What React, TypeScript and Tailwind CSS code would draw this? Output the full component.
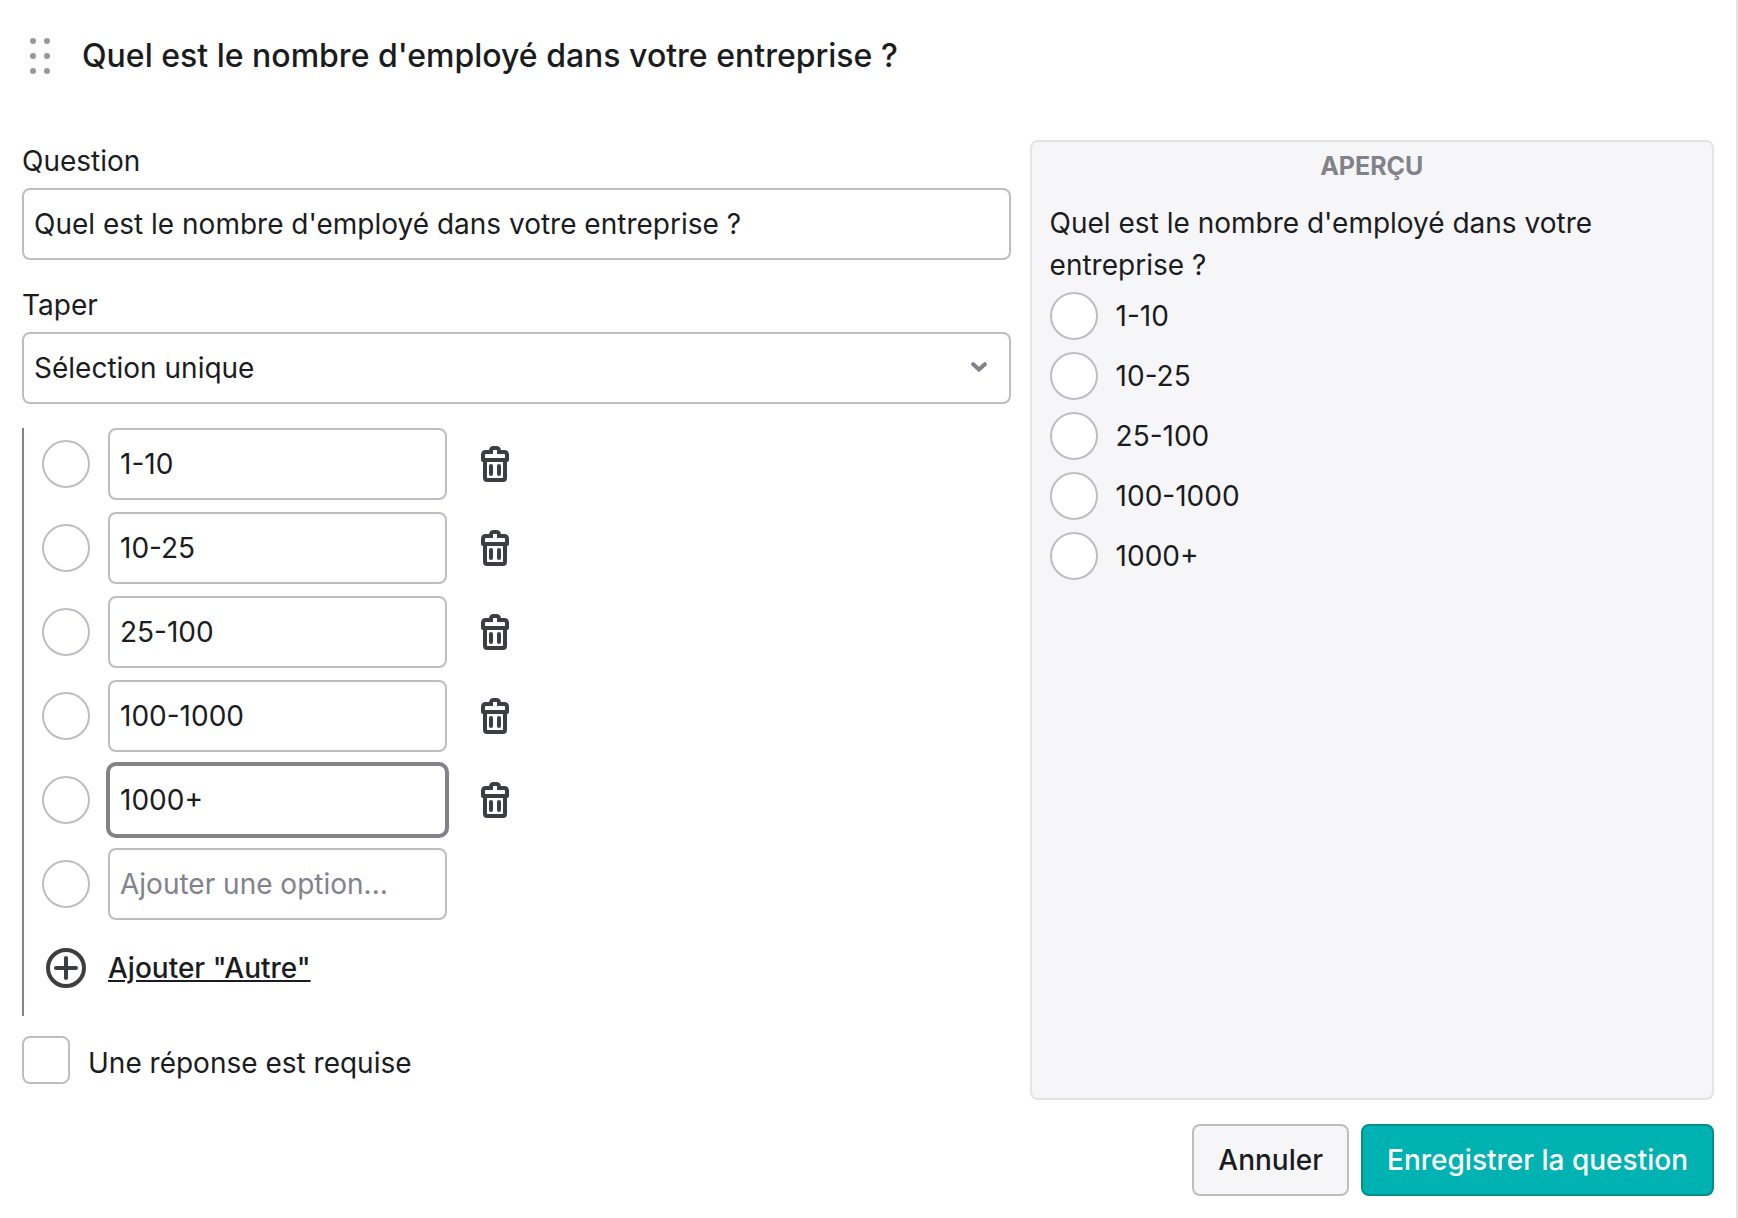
import { useState } from 'react';
import { clsx } from 'clsx';

const TITLE = "Quel est le nombre d'employé dans votre entreprise ?";
const OPTIONS = ['1-10', '10-25', '25-100', '100-1000', '1000+'];

const fieldClass =
  'w-full h-[72px] px-[10px] rounded-lg border-2 bg-white text-[#1a1c21] outline-none placeholder:text-[#82828c] placeholder:opacity-100';

const radioClass =
  'appearance-none w-12 h-12 shrink-0 rounded-full border-2 border-[#bdbdc3] bg-white';

function DragHandle() {
  return (
    <svg className="w-9 h-9" viewBox="0 0 36 36" fill="#96969f" aria-hidden="true">
      {[3, 18, 33].map((y) => (
        <g key={y}>
          <circle cx="11" cy={y} r="3" />
          <circle cx="25" cy={y} r="3" />
        </g>
      ))}
    </svg>
  );
}

function TrashIcon() {
  return (
    <svg className="w-7 h-9" viewBox="0 0 28 36" fill="none" stroke="#3d3e43" strokeWidth="4" strokeLinejoin="round" aria-hidden="true">
      <path d="M4 14v17.5c0 1.4.8 2.5 2 2.5h16c1.2 0 2-1.1 2-2.5V14" />
      <path d="M2 14V9c0-2 1-3 3-3h18c2 0 3 1 3 3v5z" />
      <path d="M10 5c0-2 1-3 3-3h2c2 0 3 1 3 3" />
      <path d="M14 4v4" stroke="#fff" />
      <path d="M10 20v8M18 20v8" strokeLinecap="round" />
    </svg>
  );
}

function PlusIcon() {
  return (
    <svg className="w-10 h-10" viewBox="0 0 40 40" fill="none" stroke="#3d3e43" strokeWidth="4" strokeLinecap="round" aria-hidden="true">
      <circle cx="20" cy="20" r="18" />
      <path d="M20 10v20M10 20h20" />
    </svg>
  );
}

interface OptionRowProps {
  value: string;
  focused?: boolean;
  onChange: (value: string) => void;
  onDelete?: () => void;
}

function OptionRow({ value, focused, onChange, onDelete }: OptionRowProps) {
  return (
    <div className="flex items-center">
      <input type="radio" disabled aria-label={value || 'Nouvelle option'} className={radioClass} />
      <div className="w-[339px] ml-[18px]">
        <input
          type="text"
          aria-label="Option"
          value={value}
          placeholder="Ajouter une option..."
          onChange={(e) => onChange(e.target.value)}
          className={clsx(fieldClass, focused ? 'border-[#82828a] ring-2 ring-[#82828a]' : 'border-[#bdbdc3]')}
        />
      </div>
      {onDelete && (
        <button type="button" aria-label="Supprimer" onClick={onDelete} className="ml-6 w-12 h-12 flex items-center justify-center">
          <TrashIcon />
        </button>
      )}
    </div>
  );
}

export default function App() {
  const [question, setQuestion] = useState(TITLE);
  const [options, setOptions] = useState(OPTIONS);
  const [draft, setDraft] = useState('');

  return (
    <form className="min-h-screen flex flex-col bg-white border-r-2 border-[#e3e3e6] px-[22px] pb-[22px] font-['Inter',sans-serif] text-[28px] leading-[42px] text-[#1a1c21]">
      <header className="h-28 flex items-center gap-6">
        <DragHandle />
        <h1 className="text-[32px] font-medium leading-[42px]">{question}</h1>
      </header>

      <div className="grow mt-7 grid grid-cols-[13fr_9fr] gap-[19px]">
        <div className="flex flex-col">
          <label htmlFor="question">Question</label>
          <div className="mt-[6px]">
            <input id="question" type="text" value={question} onChange={(e) => setQuestion(e.target.value)} className={clsx(fieldClass, 'border-[#bdbdc3]')} />
          </div>

          <label htmlFor="type" className="mt-6">Taper</label>
          <div className="relative mt-[6px]">
            <select id="type" className={clsx(fieldClass, 'appearance-none border-[#bdbdc3]')}>
              <option>Sélection unique</option>
            </select>
            <svg className="absolute right-6 top-[30px] w-4 h-[10px] pointer-events-none" viewBox="0 0 16 10" fill="none" stroke="#82828a" strokeWidth="4" strokeLinecap="round" aria-hidden="true">
              <path d="M2.2 2.2 8 7.5l5.800-5.300" />
            </svg>
          </div>

          <div className="mt-6 pb-3 pl-[18px] border-l-2 border-[#82828c] flex flex-col gap-3">
            {options.map((option, idx) => (
              <OptionRow
                key={idx}
                value={option}
                focused={idx === 4}
                onChange={(v) => setOptions(options.map((o, i) => (i === idx ? v : o)))}
                onDelete={() => setOptions(options.filter((_, i) => i !== idx))}
              />
            ))}
            <OptionRow value={draft} onChange={setDraft} />
            <button type="button" className="h-[72px] self-start flex items-center gap-[18px] font-medium">
              <span className="w-12 flex justify-center"><PlusIcon /></span>
              <span className="underline">Ajouter "Autre"</span>
            </button>
          </div>

          <label className="mt-5 flex items-start gap-[18px]">
            <input type="checkbox" className="appearance-none w-12 h-12 shrink-0 rounded-lg border-2 border-[#bdbdc3] bg-white" />
            <span className="pt-[6px]">Une réponse est requise</span>
          </label>
        </div>

        <section className="rounded-lg border-2 border-[#e3e3e6] bg-[#f6f6f9] px-[18px]">
          <h2 className="mt-[6px] text-center text-[25px] leading-9 font-bold uppercase text-[#82828a]">Aperçu</h2>
          <p className="mt-[18px]">{question}</p>
          <div className="mt-[6px] flex flex-col gap-3">
            {options.map((option, idx) => (
              <label key={idx} className="flex items-center gap-[18px]">
                <input type="radio" name="preview" className={radioClass} />
                <span>{option}</span>
              </label>
            ))}
          </div>
        </section>
      </div>

      <footer className="mt-6 flex justify-end gap-3 font-medium">
        <button type="button" className="h-[72px] px-6 rounded-lg border-2 border-[#bdbdc3] bg-[#f6f6f9]">Annuler</button>
        <button type="submit" className="h-[72px] px-6 rounded-lg border-2 border-[#008f8f] bg-[#00b2b2] text-white">Enregistrer la question</button>
      </footer>
    </form>
  );
}
